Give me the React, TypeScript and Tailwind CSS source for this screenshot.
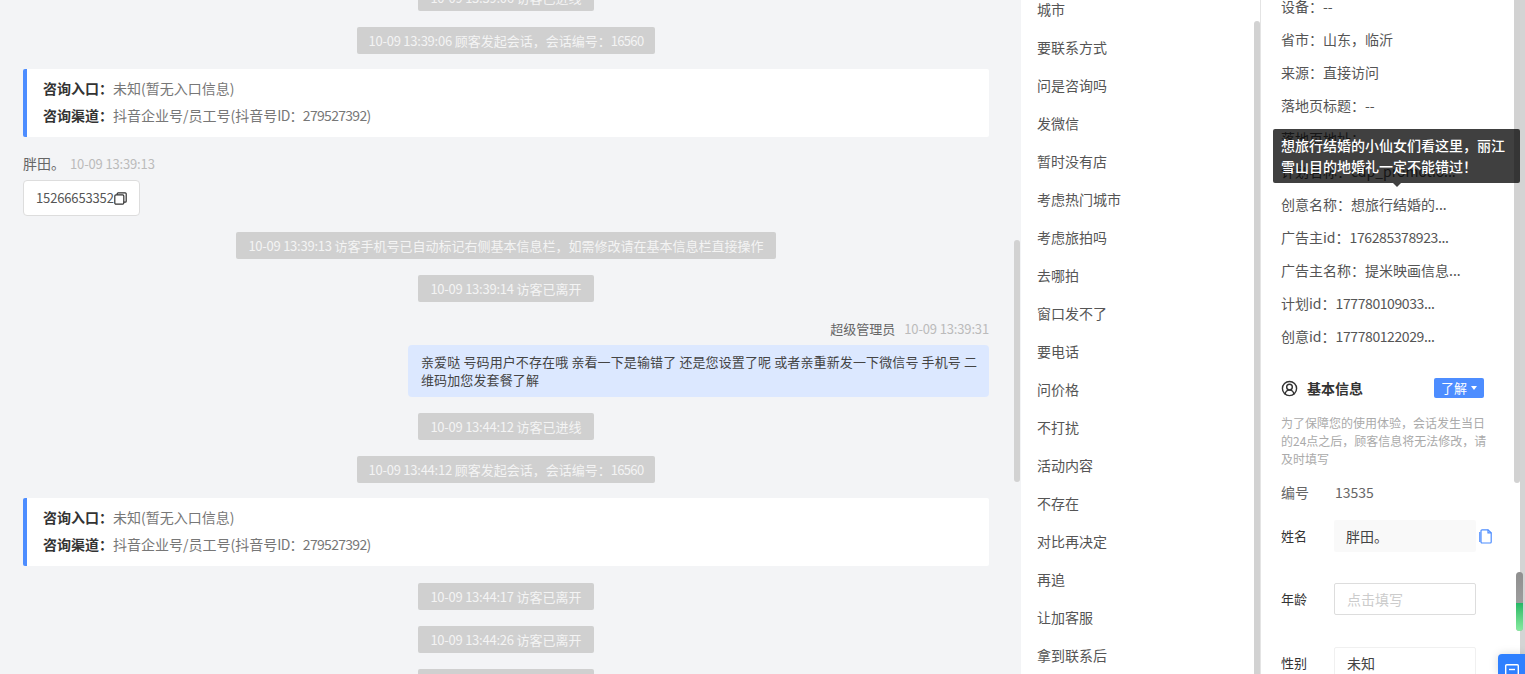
import React from "react";
import { CircleUserRound } from "lucide-react";

const font = "font-['Noto_Sans_CJK_SC','Noto_Sans',sans-serif]";

const replies = [
  "城市",
  "要联系方式",
  "问是咨询吗",
  "发微信",
  "暂时没有店",
  "考虑热门城市",
  "考虑旅拍吗",
  "去哪拍",
  "窗口发不了",
  "要电话",
  "问价格",
  "不打扰",
  "活动内容",
  "不存在",
  "对比再决定",
  "再追",
  "让加客服",
  "拿到联系后",
];

const visitorInfo = [
  { label: "设备：", value: "--" },
  { label: "省市：", value: "山东，临沂" },
  { label: "来源：", value: "直接访问" },
  { label: "落地页标题：", value: "--" },
  { label: "落地页地址：", value: "" },
  { label: "计划名称：", value: "cdp_promotio..." },
  { label: "创意名称：", value: "想旅行结婚的..." },
  { label: "广告主id：", value: "176285378923...", tight: true },
  { label: "广告主名称：", value: "提米映画信息..." },
  { label: "计划id：", value: "177780109033...", tight: true },
  { label: "创意id：", value: "177780122029...", tight: true },
];

function Pill({ time, text, num }: { time: string; text: string; num?: string }) {
  return (
    <div className="flex justify-center mb-4">
      <div className="h-[27px] leading-[27px] px-3 rounded-[2px] bg-[#d0d0d0] text-[13px] text-[#f4f4f4] whitespace-nowrap">
        <span className="tracking-[-0.25px]">{time}</span> {text}
        {num && <span className="tracking-[-0.7px]">{num}</span>}
      </div>
    </div>
  );
}

function EntryCard() {
  return (
    <div className="h-[68px] -mt-px mb-[17px] bg-white border-l-4 border-[#4d8dff] rounded-[2px] pl-4 pt-[6px] text-[14px] leading-[27px]">
      <div>
        <span className="font-bold text-[#333]">咨询入口：</span>
        <span className="text-[#777]">未知(暂无入口信息)</span>
      </div>
      <div>
        <span className="font-bold text-[#333]">咨询渠道：</span>
        <span className="text-[#777]">
          抖音企业号/员工号(抖音号<span className="tracking-[-0.7px]">ID：279527392)</span>
        </span>
      </div>
    </div>
  );
}

function CopyIcon() {
  return (
    <svg width="13" height="13" viewBox="0 0 13 13" fill="none" stroke="#333" strokeWidth="1.2">
      <rect x="0.8" y="2.8" width="9" height="9.4" rx="1.2" />
      <path d="M3.2 2.8V1.8a1 1 0 0 1 1-1h7a1 1 0 0 1 1 1v7.4a1 1 0 0 1-1 1h-1.6" />
    </svg>
  );
}

function FormRow({ label, children, className }: { label: string; children: React.ReactNode; className: string }) {
  return (
    <div className={`flex items-center text-[14px] ${className}`}>
      <span className="w-[53px] shrink-0 text-[13px] text-[#333]">{label}</span>
      {children}
    </div>
  );
}

export default function App() {
  return (
    <div className={`relative flex w-screen h-screen overflow-hidden bg-[#f3f4f6] ${font}`}>
      {/* chat */}
      <div className="flex w-[1021px] shrink-0">
        <div className="w-[1014px] -mt-4 pl-[23px] pr-[25px]">
          <Pill time="10-09 13:39:06" text="访客已进线" />
          <Pill time="10-09 13:39:06" text="顾客发起会话，会话编号：" num="16560" />
          <EntryCard />
          <div className="h-[17px] mt-[18px] flex items-center gap-[5px]">
            <span className="text-[14px] text-[#666]">胖田。</span>
            <span className="text-[13px] text-[#bbb] tracking-[-0.15px]">10-09 13:39:13</span>
          </div>
          <div className="mt-[8px] mb-4 w-[117px] h-[36px] flex items-center pl-[12px] bg-white border border-[#ddd] rounded-[4px] text-[13px] text-[#555]">
            <span className="tracking-[-0.15px]">15266653352</span>
            <CopyIcon />
          </div>
          <Pill time="10-09 13:39:13" text="访客手机号已自动标记右侧基本信息栏，如需修改请在基本信息栏直接操作" />
          <Pill time="10-09 13:39:14" text="访客已离开" />
          <div className="h-[17px] mt-[18px] flex items-center justify-end gap-[9px]">
            <span className="text-[13px] text-[#666]">超级管理员</span>
            <span className="text-[13px] text-[#bbb] tracking-[-0.15px]">10-09 13:39:31</span>
          </div>
          <div className="flex justify-end mt-[8px] mb-4">
            <div className="w-[581px] h-[52px] pl-[13px] pr-2 py-2 bg-[#dce8ff] rounded-[4px] text-[13px] leading-[18px] tracking-[0.12px] text-[#444]">
              亲爱哒 号码用户不存在哦 亲看一下是输错了 还是您设置了呢 或者亲重新发一下微信号 手机号 二维码加您发套餐了解
            </div>
          </div>
          <Pill time="10-09 13:44:12" text="访客已进线" />
          <Pill time="10-09 13:44:12" text="顾客发起会话，会话编号：" num="16560" />
          <EntryCard />
          <Pill time="10-09 13:44:17" text="访客已离开" />
          <Pill time="10-09 13:44:26" text="访客已离开" />
          <Pill time="10-09 13:44:26" text="访客已进线" />
        </div>
        <div className="w-[6px]">
          <div className="mt-[240px] h-[242px] rounded-t-[3px] rounded-b-[3px] bg-[#d2d2d2]" />
        </div>
      </div>

      {/* quick replies */}
      <div className="flex w-[240px] shrink-0 bg-white border-r border-[#e4e4e4]">
        <div className="w-[233px] -mt-[10px] pl-4">
          {replies.map((r) => (
            <div key={r} className="h-[38px] leading-[38px] text-[14px] text-[#555]">
              {r}
            </div>
          ))}
        </div>
        <div className="w-[6px]">
          <div className="mt-[21px] h-[653px] rounded-t-[3px] bg-[#d2d2d2]" />
        </div>
      </div>

      {/* visitor info */}
      <div className="flex w-[259px] shrink-0 bg-white">
        <div className="w-[253px] -mt-[10px] pl-5 pr-[28px]">
          {visitorInfo.map((t) => (
            <div key={t.label} className="h-[33px] leading-[33px] text-[14px] text-[#555] whitespace-nowrap">
              {t.label}
              <span className={t.tight ? "tracking-[-0.4px]" : ""}>{t.value}</span>
            </div>
          ))}
          <div className="mt-[25px] flex items-center h-5">
            <CircleUserRound size={17} strokeWidth={2} className="text-[#333]" />
            <span className="ml-[9px] text-[14px] font-bold text-[#333]">基本信息</span>
            <span className="ml-auto mr-[2px] w-[50px] h-5 flex items-center justify-center gap-[4px] rounded-[2px] bg-[#4d8dff] text-[13px] text-white">
              了解
              <span className="border-x-[3px] border-t-[4px] border-x-transparent border-t-white" />
            </span>
          </div>
          <p className="mt-[16px] w-[212px] text-[12px] leading-[18px] text-[#aaa]">
            为了保障您的使用体验，会话发生当日的24点之后，顾客信息将无法修改，请及时填写
          </p>
          <div className="mt-[15px] h-[18px] flex items-center text-[14px] text-[#666]">
            <span className="w-[54px] shrink-0">编号</span>
            <span>13535</span>
          </div>
          <FormRow label="姓名" className="mt-[19px]">
            <div className="w-[142px] h-[32px] shrink-0 leading-[32px] pl-3 rounded-[2px] bg-[#f9f9f9] text-[#444]">胖田。</div>
            <svg width="13" height="15" viewBox="0 0 13 15" fill="none" stroke="#4d8dff" strokeWidth="1.2" className="ml-[3px] shrink-0">
              <path d="M3 .8h6l3.2 3v9.2a1 1 0 0 1-1 1H3a1 1 0 0 1-1-1V1.8a1 1 0 0 1 1-1Z" />
              <path d="M9 .8v3h3.2" />
              <path d="M.8 3v10" />
            </svg>
          </FormRow>
          <FormRow label="年龄" className="mt-[31px]">
            <div className="w-[142px] h-[32px] shrink-0 leading-[30px] pl-3 rounded-[2px] border border-[#ddd] text-[#ccc]">点击填写</div>
          </FormRow>
          <FormRow label="性别" className="mt-[32px]">
            <div className="w-[142px] h-[32px] shrink-0 leading-[30px] pl-3 rounded-[2px] border border-[#f0f0f0] text-[#444]">未知</div>
          </FormRow>
        </div>
        <div className="w-[6px]">
          <div className="h-[483px] rounded-b-[3px] bg-[#d2d2d2]" />
        </div>
      </div>
      <div className="flex-1 bg-[#d4d4d4]" />

      {/* tooltip */}
      <div className="absolute left-[1273px] top-[129px] w-[247px] h-[54px] px-2 py-[6px] rounded-[2px] bg-black/75 text-[14px] leading-[21px] font-medium text-white">
        想旅行结婚的小仙女们看这里，丽江雪山目的地婚礼一定不能错过！
        <span className="absolute left-[120px] top-full border-x-[4px] border-t-[4px] border-x-transparent border-t-black/75" />
      </div>

      {/* floating scroll indicator */}
      <div className="absolute left-[1516px] top-[572px] w-[7px] h-[59px] rounded-full overflow-hidden flex flex-col bg-gradient-to-b from-[#8f8f8f] to-[#aaa]">
        <div className="mt-[31px] flex-1 bg-gradient-to-b from-[#22b866] to-[#86eca0]" />
      </div>

      {/* chat widget button */}
      <div className="absolute left-[1498px] top-[654px] w-[27px] h-[20px] rounded-tl-[4px] bg-[#2f80ff] shadow-[0_0_10px_rgba(0,0,0,0.15)] flex justify-center pt-[10px]">
        <svg width="14" height="12" viewBox="0 0 14 12" fill="none" stroke="#fff" strokeWidth="1.4" className="shrink-0">
          <rect x="0.7" y="0.7" width="12.6" height="10.6" rx="1" />
          <path d="M4 5.5h6" />
        </svg>
      </div>
    </div>
  );
}
